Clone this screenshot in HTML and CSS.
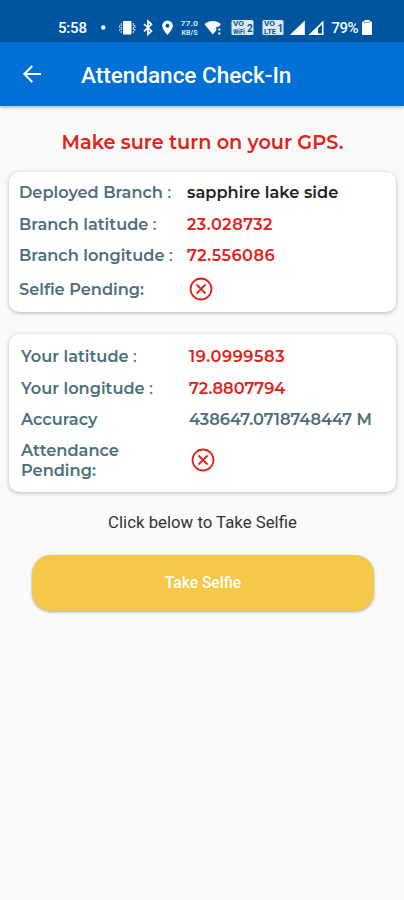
FILE: index.html
```html
<!DOCTYPE html>
<html lang="en">
<head>
<meta charset="utf-8">
<title>Attendance Check-In</title>
<link rel="stylesheet" href="styles.css">
</head>
<body>
<div class="status">
  <span class="time">5:58</span>
  <svg class="status-icons" viewBox="100 15 276 26" width="276" height="26" fill="#fff">
    <circle cx="103.300" cy="27.500" r="2.200"/>
    <rect x="123" y="21" width="8.500" height="13.500" rx="1"/>
    <path d="M121.300 23v10M133.300 23v10M119.800 25v6M134.800 25v6" stroke="#d5e5f3" stroke-width="1" stroke-dasharray="3 1"/>
    <path d="M144 24l7.500 7-3.500 3.300V21.200l3.500 3.100-7.500 7" fill="none" stroke="#fff" stroke-width="1.700"/>
    <path fill-rule="evenodd" d="M167.500 20.500a5.300 5.300 0 0 0-5.300 5.300c0 3.800 5.300 9.200 5.300 9.200s5.300-5.400 5.300-9.200a5.300 5.300 0 0 0-5.300-5.300zm0 3.300a2 2 0 1 1 0 4 2 2 0 0 1 0-4z"/>
    <text x="180.500" y="26.300" class="tiny" textLength="17.500" lengthAdjust="spacingAndGlyphs">77.0</text>
    <text x="181.500" y="35" class="tiny" textLength="16" lengthAdjust="spacingAndGlyphs">KB/S</text>
    <path d="M204.500 24.200a12 12 0 0 1 16.500 0l-2.200 2.600h-2.500v3.500l-3.500 4.200z"/>
    <path d="M218.300 28.500h2v2h-2zM218.300 32.500h2v2h-2z"/>
    <rect x="231.500" y="20" width="22" height="15" rx="1.500" fill="#dce9f5"/>
    <rect x="262.500" y="20" width="21" height="15" rx="1.500" fill="#dce9f5"/>
    <g class="sim"><text x="233" y="26.300" textLength="11" lengthAdjust="spacingAndGlyphs">VO</text><text x="233" y="34" textLength="12" lengthAdjust="spacingAndGlyphs">WiFi</text><text x="247" y="31.500" class="num">2</text>
    <text x="264" y="26.300" textLength="11" lengthAdjust="spacingAndGlyphs">VO</text><text x="264" y="34" textLength="12" lengthAdjust="spacingAndGlyphs">LTE</text><text x="277.500" y="31.500" class="num">1</text></g>
    <path d="M304.800 20.500V35h-15z"/>
    <path fill-rule="evenodd" d="M323.500 20.500V35h-15zM322 24.300l-4 4V33.500h4z"/>
    <text x="331.500" y="33.300" class="battery" textLength="27">79%</text>
    <path d="M364.500 20h5v1.500h1.500a1 1 0 0 1 1 1v11.500a1 1 0 0 1-1 1h-8a1 1 0 0 1-1-1V22.500a1 1 0 0 1 1-1h1.500z"/>
    <path d="M364 22.500h6" stroke="#8bb3d6" stroke-width="1"/>
  </svg>
</div>
<header class="bar">
  <svg class="back" width="20" height="20" viewBox="0 0 20 20" fill="none" stroke="#fff" stroke-width="2"><path d="M19 10H2.500M10.300 2L2.300 10l8 8"/></svg>
  <h1>Attendance Check-In</h1>
</header>
<main>
  <h2>Make sure turn on your GPS.</h2>
  <section class="card first">
    <div class="row"><span class="label">Deployed Branch <span class="colon">:</span></span><span class="value dark">sapphire lake side</span></div>
    <div class="row"><span class="label">Branch latitude <span class="colon">:</span></span><span class="value wide">23.028732</span></div>
    <div class="row"><span class="label">Branch longitude <span class="colon">:</span></span><span class="value wide">72.556086</span></div>
    <div class="row icon-row"><span class="label">Selfie Pending:</span><svg class="cross" width="24" height="24" viewBox="0 0 24 24"><circle cx="12" cy="12" r="10.500"/><path d="M7.500 7.500l9 9M16.500 7.500l-9 9"/></svg></div>
  </section>
  <section class="card second">
    <div class="row"><span class="label">Your latitude <span class="colon">:</span></span><span class="value wider">19.0999583</span></div>
    <div class="row"><span class="label">Your longitude <span class="colon">:</span></span><span class="value">72.8807794</span></div>
    <div class="row"><span class="label">Accuracy</span><span class="value slate">438647.0718748447 M</span></div>
    <div class="row tall"><span class="label">Attendance<br>Pending:</span><svg class="cross" width="24" height="24" viewBox="0 0 24 24"><circle cx="12" cy="12" r="10.500"/><path d="M7.500 7.500l9 9M16.500 7.500l-9 9"/></svg></div>
  </section>
  <p class="hint">Click below to Take Selfie</p>
  <button class="take">Take Selfie</button>
</main>
</body>
</html>
```
FILE: styles.css
```css
* { box-sizing: border-box; }
body { margin: 0; min-height: 900px; background: #fafafa; font-family: Roboto, sans-serif; }
.status { height: 42px; padding: 15px 0 0 58px; display: flex; background: #0055a0; color: #fff; }
.time { width: 42px; font-size: 15px; line-height: 26px; font-weight: 500; letter-spacing: -.2px; }
.status-icons { flex: none; }
.tiny { font: 700 7px Roboto, sans-serif; fill: #d5e5f3; }
.sim { font: 700 6.3px Roboto, sans-serif; fill: #0055a0; }
.num { font-size: 10px; }
.battery { font: 500 15px Roboto, sans-serif; }
.bar { height: 64px; display: flex; align-items: center; padding-left: 22px; background: #0070d6; color: #fff; box-shadow: 0 1px 4px rgba(0,0,0,.35); }
.back { flex: none; margin-right: 39px; }
h1 { margin: 1px 0 0; font-size: 22.5px; line-height: 28px; font-weight: 500; white-space: nowrap; }
main { padding: 24px 8px 0 9px; }
h2, .card { font-family: Montserrat, Inter, sans-serif; }
h2 { margin: 0 0 17px; text-align: center; font-size: 19.25px; line-height: 25px; font-weight: 600; color: #e32219; white-space: nowrap; }
.card { background: #fff; border-radius: 10px; box-shadow: 0 1px 4px rgba(0,0,0,.27); font-size: 16.2px; font-weight: 600; color: #4b707b; white-space: nowrap; }
.first { height: 140px; padding: 4.4px 10px; margin-bottom: 22px; }
.second { height: 158px; padding: 6.4px 12px; margin-bottom: 20px; }
.row { display: flex; align-items: center; height: 31.5px; }
.label { flex: none; width: 168px; line-height: 20px; }
.colon { font-weight: 500; }
.value { color: #e32219; }
.wide { letter-spacing: .45px; }
.wider { letter-spacing: .55px; }
.dark { color: #222; letter-spacing: .05px; }
.slate { color: #4b707b; }
.icon-row { height: 37px; }
.tall { height: 51px; }
.cross { fill: none; stroke: #e32219; stroke-width: 1.8; margin-left: 1.5px; }
.hint { margin: 0; text-align: center; font-size: 16.8px; line-height: 20px; color: #333; }
.take { display: block; width: 342px; height: 56px; margin: 23px 0 0 23px; padding: 0; border: 0; border-radius: 19px; background: #f6c847; color: #fff; font: 500 15.6px Roboto, sans-serif; box-shadow: 0 1px 3px rgba(0,0,0,.35); }
```
